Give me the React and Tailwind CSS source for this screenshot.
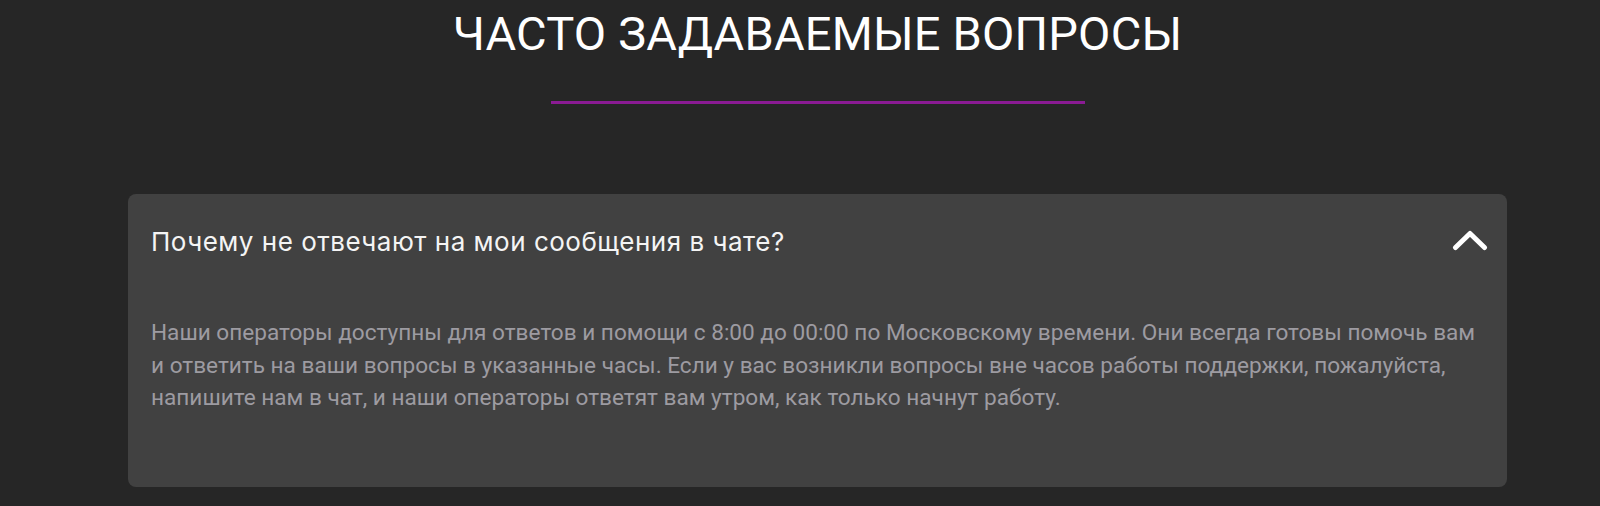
import { useState } from "react";

const faq = {
  question: "Почему не отвечают на мои сообщения в чате?",
  answer:
    "Наши операторы доступны для ответов и помощи с 8:00 до 00:00 по Московскому времени. Они всегда готовы помочь вам и ответить на ваши вопросы в указанные часы. Если у вас возникли вопросы вне часов работы поддержки, пожалуйста, напишите нам в чат, и наши операторы ответят вам утром, как только начнут работу.",
};

function Chevron({ open }) {
  return (
    <svg
      width="36"
      height="22"
      viewBox="0 0 36 22"
      fill="none"
      stroke="currentColor"
      strokeWidth="5"
      strokeLinecap="round"
      strokeLinejoin="round"
      className={open ? "" : "rotate-180"}
    >
      <path d="M3.5 18.5 18 4.5l14.5 14" />
    </svg>
  );
}

export default function App() {
  const [open, setOpen] = useState(true);

  return (
    <div className="min-h-screen w-full bg-[#262626] font-['Roboto','Noto_Sans',sans-serif]">
      <div className="ml-[128px] w-[1379px] flex flex-col items-center">
        <h2 className="h-[66px] flex items-center text-[47px] font-normal leading-none text-white tracking-[0.2px]">
          ЧАСТО ЗАДАВАЕМЫЕ ВОПРОСЫ
        </h2>
        <div className="mt-[35px] h-[3px] w-[534px] bg-[#8a1b93]" />

        <div className="mt-[90px] w-full rounded-lg bg-[#414141]">
          <button
            className="h-[92px] w-full pl-[23px] pr-[19px] flex items-center justify-between text-left"
            onClick={() => setOpen(!open)}
          >
            <span className="pt-[3px] text-[26px] tracking-[0.5px] text-[#f4f4f4] font-['Inter','Noto_Sans',sans-serif]">
              {faq.question}
            </span>
            <span className="text-white">
              <Chevron open={open} />
            </span>
          </button>
          {open && (
            <p className="max-w-[1356px] pl-[23px] pt-[31px] pb-[72px] text-[22.6px] leading-[32.5px] text-[#9d9ba1]">
              {faq.answer}
            </p>
          )}
        </div>
      </div>
    </div>
  );
}
